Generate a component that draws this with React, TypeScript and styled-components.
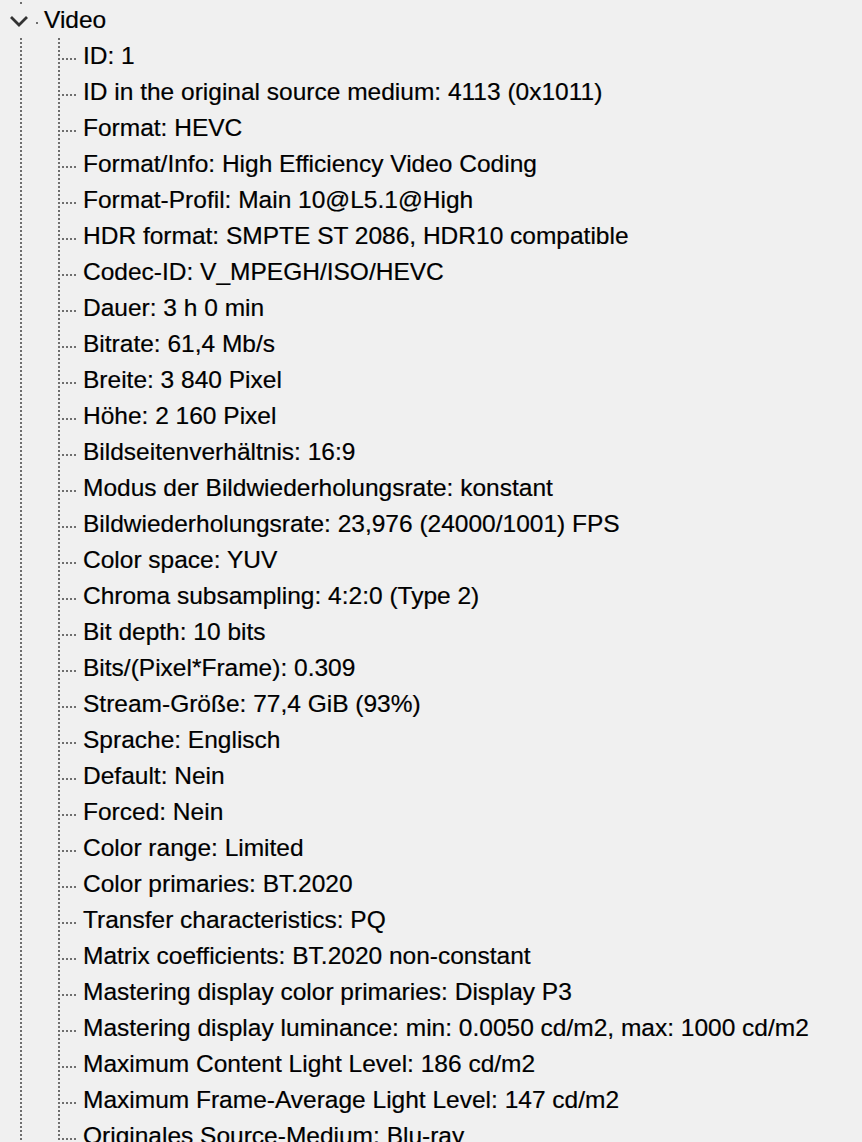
import React from "react";
import styled, { createGlobalStyle } from "styled-components";

const GlobalStyle = createGlobalStyle`
  html, body {
    margin: 0;
    padding: 0;
    background: #f0f0f0;
    overflow: hidden;
  }
  body {
    font-family: "Liberation Sans", Arial, sans-serif;
  }
`;

const DOT = "#6e6e6e";

const Page = styled.div`
  width: 862px;
  height: 1142px;
  overflow: hidden;
  background: #f0f0f0;
`;

const Tree = styled.ul`
  list-style: none;
  margin: 0;
  padding: 5px 0 0 0;
  background-image: repeating-linear-gradient(to bottom, ${DOT} 0 2px, transparent 2px 4px);
  background-size: 2px 100%;
  background-position: 20px 2px;
  background-repeat: no-repeat;
`;

const Node = styled.li`
  margin: 0;
  padding: 0;
`;

const NodeRow = styled.div`
  display: flex;
  align-items: flex-start;
  height: 36px;
`;

const Expander = styled.button`
  width: 22px;
  height: 32px;
  margin: 0 0 0 8px;
  padding: 0;
  border: 0;
  background: #f0f0f0;
  display: flex;
  align-items: center;
  justify-content: center;
  cursor: default;
`;

const RootDot = styled.span`
  width: 2px;
  height: 2px;
  margin: 17px 0 0 6px;
  background: ${DOT};
`;

const Label = styled.span<{ $offset: number }>`
  margin-left: ${(p) => p.$offset}px;
  font-family: "Liberation Sans", Arial, sans-serif;
  font-size: 24.5px;
  line-height: 29px;
  color: #000;
  white-space: nowrap;
  -webkit-text-stroke: 0.2px #000;
`;

const Children = styled.ul`
  list-style: none;
  margin: -3px 0 0 0;
  padding: 3px 0 0 0;
  background-image: repeating-linear-gradient(to bottom, ${DOT} 0 2px, transparent 2px 4px);
  background-size: 2px 100%;
  background-position: 58px 0;
  background-repeat: no-repeat;
`;

const Leaf = styled.li`
  display: flex;
  align-items: flex-start;
  height: 36px;
`;

const Connector = styled.span`
  width: 16px;
  height: 2px;
  margin: 17px 0 0 62px;
  background-image: repeating-linear-gradient(to right, ${DOT} 0 2px, transparent 2px 4px);
  flex-shrink: 0;
`;

const items = [
  "ID: 1",
  "ID in the original source medium: 4113 (0x1011)",
  "Format: HEVC",
  "Format/Info: High Efficiency Video Coding",
  "Format-Profil: Main 10@L5.1@High",
  "HDR format: SMPTE ST 2086, HDR10 compatible",
  "Codec-ID: V_MPEGH/ISO/HEVC",
  "Dauer: 3 h 0 min",
  "Bitrate: 61,4 Mb/s",
  "Breite: 3 840 Pixel",
  "Höhe: 2 160 Pixel",
  "Bildseitenverhältnis: 16:9",
  "Modus der Bildwiederholungsrate: konstant",
  "Bildwiederholungsrate: 23,976 (24000/1001) FPS",
  "Color space: YUV",
  "Chroma subsampling: 4:2:0 (Type 2)",
  "Bit depth: 10 bits",
  "Bits/(Pixel*Frame): 0.309",
  "Stream-Größe: 77,4 GiB (93%)",
  "Sprache: Englisch",
  "Default: Nein",
  "Forced: Nein",
  "Color range: Limited",
  "Color primaries: BT.2020",
  "Transfer characteristics: PQ",
  "Matrix coefficients: BT.2020 non-constant",
  "Mastering display color primaries: Display P3",
  "Mastering display luminance: min: 0.0050 cd/m2, max: 1000 cd/m2",
  "Maximum Content Light Level: 186 cd/m2",
  "Maximum Frame-Average Light Level: 147 cd/m2",
  "Originales Source-Medium: Blu-ray",
];

export default function App() {
  return (
    <Page>
      <GlobalStyle />
      <Tree>
        <Node>
          <NodeRow>
            <Expander aria-label="collapse">
              <svg width="22" height="32" viewBox="0 0 22 32">
                <polyline
                  points="3,12 11,20 19,12"
                  fill="none"
                  stroke="#333333"
                  strokeWidth="2.8"
                />
              </svg>
            </Expander>
            <RootDot />
            <Label $offset={6}>Video</Label>
          </NodeRow>
          <Children>
            {items.map((t) => (
              <Leaf key={t}>
                <Connector />
                <Label $offset={5}>{t}</Label>
              </Leaf>
            ))}
          </Children>
        </Node>
      </Tree>
    </Page>
  );
}
